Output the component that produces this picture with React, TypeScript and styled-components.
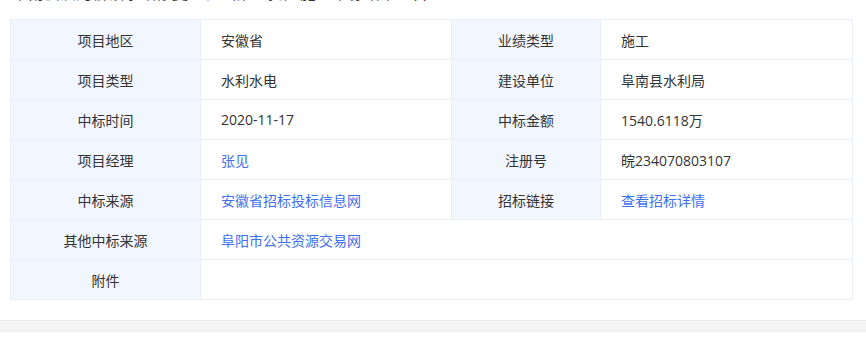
import React from "react";
import styled, { createGlobalStyle } from "styled-components";

const GlobalStyle = createGlobalStyle`
  html, body {
    margin: 0;
    padding: 0;
    background: #fff;
  }
  body {
    font-family: "Open Sans", "Noto Sans CJK SC", sans-serif;
    color: #333;
    overflow: hidden;
  }
`;

const Page = styled.div`
  display: flex;
  flex-direction: column;
  width: 866px;
`;

const Content = styled.div`
  padding: 0 14px 20px 10px;
`;

const Title = styled.h3`
  margin: -19px 0 0 2px;
  font-size: 16px;
  line-height: 24px;
  font-weight: normal;
  color: #333;
  white-space: nowrap;
  height: 24px;
`;

const Table = styled.table`
  margin-top: 14px;
  width: 842px;
  border-collapse: collapse;
  table-layout: fixed;
  font-size: 14px;
`;

const Cell = styled.td<{ $label?: boolean }>`
  height: 39px;
  padding: 0 ${(p) => (p.$label ? "0" : "20px")};
  border: 1px solid #e9eef7;
  background: ${(p) => (p.$label ? "#f2f6fe" : "#fff")};
  text-align: ${(p) => (p.$label ? "center" : "left")};
  color: #333;
  white-space: nowrap;
`;

const Link = styled.a`
  color: #3d6ff0;
  text-decoration: none;
  cursor: pointer;
`;

const Footer = styled.div`
  height: 10px;
  background: #f4f4f4;
  border-top: 1px solid #ececec;
  border-bottom: 1px solid #f0f0f0;
`;

type Val = { text: string; link?: boolean };

const rows: [string, Val, string, Val][] = [
  ["项目地区", { text: "安徽省" }, "业绩类型", { text: "施工" }],
  ["项目类型", { text: "水利水电" }, "建设单位", { text: "阜南县水利局" }],
  ["中标时间", { text: "2020-11-17" }, "中标金额", { text: "1540.6118万" }],
  ["项目经理", { text: "张见", link: true }, "注册号", { text: "皖234070803107" }],
  ["中标来源", { text: "安徽省招标投标信息网", link: true }, "招标链接", { text: "查看招标详情", link: true }],
];

const renderVal = (v: Val) => (v.link ? <Link>{v.text}</Link> : v.text);

export default function App() {
  return (
    <Page>
      <GlobalStyle />
      <Content>
        <Title>阜南县洪河桥镇水毁修复工程（第一批）施工中标结果公告</Title>
        <Table>
          <colgroup>
            <col style={{ width: 190 }} />
            <col style={{ width: 251 }} />
            <col style={{ width: 149 }} />
            <col style={{ width: 252 }} />
          </colgroup>
          <tbody>
            {rows.map(([l1, v1, l2, v2]) => (
              <tr key={l1}>
                <Cell $label>{l1}</Cell>
                <Cell>{renderVal(v1)}</Cell>
                <Cell $label>{l2}</Cell>
                <Cell>{renderVal(v2)}</Cell>
              </tr>
            ))}
            <tr>
              <Cell $label>其他中标来源</Cell>
              <Cell colSpan={3}>
                <Link>阜阳市公共资源交易网</Link>
              </Cell>
            </tr>
            <tr>
              <Cell $label>附件</Cell>
              <Cell colSpan={3}></Cell>
            </tr>
          </tbody>
        </Table>
      </Content>
      <Footer />
    </Page>
  );
}
